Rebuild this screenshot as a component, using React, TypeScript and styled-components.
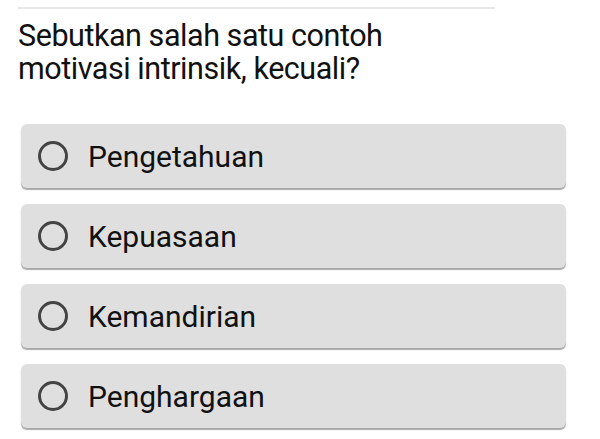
import React from "react";
import styled, { createGlobalStyle } from "styled-components";

const Global = createGlobalStyle`
  html, body { margin: 0; padding: 0; background: #ffffff; }
  body { font-family: Roboto, "Noto Sans", Arial, sans-serif; color: #111; }
`;

const Page = styled.div`
  width: 600px;
  height: 439px;
  overflow: hidden;
  padding-top: 7px;
  box-sizing: border-box;
`;

const Divider = styled.div`
  margin-left: 18px;
  width: 477px;
  height: 2px;
  background: #e8e8e8;
`;

const Question = styled.h1`
  margin: 10px 0 0 18px;
  font-size: 30.5px;
  line-height: 33px;
  font-weight: 400;
  color: #111;
  letter-spacing: -0.45px;
`;

const Options = styled.div`
  display: flex;
  flex-direction: column;
  gap: 16px;
  margin: 39px 0 0 21px;
  width: 545px;
`;

const Option = styled.div`
  display: flex;
  align-items: center;
  gap: 20px;
  height: 64px;
  padding-left: 17px;
  box-sizing: border-box;
  background: #dfdfdf;
  border-radius: 6px;
  box-shadow: 0 2px 1px #a9a9a9;
`;

const Radio = styled.span`
  width: 30px;
  height: 30px;
  box-sizing: border-box;
  border: 3px solid #444;
  border-radius: 50%;
  flex: none;
`;

const Label = styled.span`
  font-size: 30px;
  color: #111;
`;

const items = ["Pengetahuan", "Kepuasaan", "Kemandirian", "Penghargaan"];

export default function App() {
  return (
    <Page>
      <Global />
      <Divider />
      <Question>
        Sebutkan salah satu contoh
        <br />
        motivasi intrinsik, kecuali?
      </Question>
      <Options>
        {items.map((t) => (
          <Option key={t}>
            <Radio />
            <Label>{t}</Label>
          </Option>
        ))}
      </Options>
    </Page>
  );
}
